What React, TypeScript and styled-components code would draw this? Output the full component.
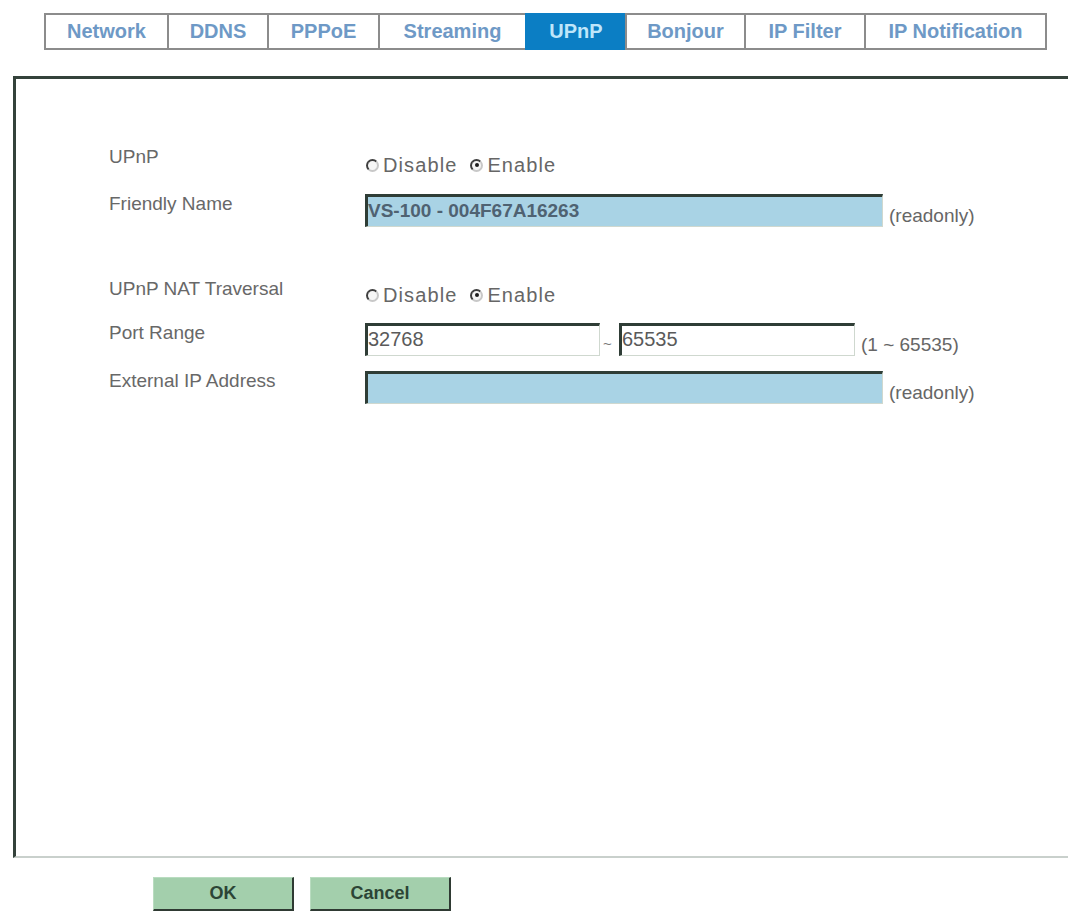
import styled, { createGlobalStyle } from "styled-components";

const tabs = [
  { label: "Network", width: 125 },
  { label: "DDNS", width: 102 },
  { label: "PPPoE", width: 113 },
  { label: "Streaming", width: 149 },
  { label: "UPnP", width: 102, active: true },
  { label: "Bonjour", width: 121 },
  { label: "IP Filter", width: 122 },
  { label: "IP Notification", width: 183 },
];

const GlobalStyle = createGlobalStyle`
  body {
    margin: 0;
    background: #ffffff;
    font-family: "Liberation Sans", Arial, sans-serif;
  }
`;

const RadioGroup = ({ checked }: { checked: "disable" | "enable" }) => (
  <Radios>
    <RadioItem>
      <Radio $on={checked === "disable"} />
      Disable
    </RadioItem>
    <RadioItem>
      <Radio $on={checked === "enable"} />
      Enable
    </RadioItem>
  </Radios>
);

export default function App() {
  return (
    <Page>
      <GlobalStyle />
      <TabBar>
        {tabs.map((t) => (
          <Tab key={t.label} $width={t.width} $active={!!t.active}>
            {t.label}
          </Tab>
        ))}
      </TabBar>

      <Panel>
        <Form>
          <Row $height={47}>
            <Label>UPnP</Label>
            <Control $pad={11}>
              <RadioGroup checked="enable" />
            </Control>
          </Row>
          <Row $height={85}>
            <Label>Friendly Name</Label>
            <Control $pad={3}>
              <Field $width={518} $readonly readOnly value="VS-100 - 004F67A16263" />
              <Hint>(readonly)</Hint>
            </Control>
          </Row>
          <Row $height={44}>
            <Label>UPnP NAT Traversal</Label>
            <Control $pad={9}>
              <RadioGroup checked="enable" />
            </Control>
          </Row>
          <Row $height={48}>
            <Label>Port Range</Label>
            <Control $pad={3}>
              <Field $width={235} readOnly value="32768" />
              <Tilde>~</Tilde>
              <Field $width={236} readOnly value="65535" />
              <Hint>(1 ~ 65535)</Hint>
            </Control>
          </Row>
          <Row $height={48}>
            <Label>External IP Address</Label>
            <Control $pad={3}>
              <Field $width={518} $readonly readOnly value="" />
              <Hint>(readonly)</Hint>
            </Control>
          </Row>
        </Form>
      </Panel>

      <Buttons>
        <Button>OK</Button>
        <Button>Cancel</Button>
      </Buttons>
    </Page>
  );
}

const Page = styled.div`
  width: 1071px;
  height: 915px;
  overflow: hidden;
  padding-top: 13px;
  box-sizing: border-box;
`;

const TabBar = styled.div`
  display: flex;
  margin-left: 44px;
`;

const Tab = styled.div<{ $width: number; $active: boolean }>`
  width: ${(p) => p.$width}px;
  height: 37px;
  box-sizing: border-box;
  margin-left: -2px;
  border: 2px solid #8c8c8c;
  display: flex;
  align-items: center;
  justify-content: center;
  font-size: 20px;
  font-weight: bold;
  color: ${(p) => (p.$active ? "#bfe6fa" : "#6e99c6")};
  background: ${(p) => (p.$active ? "#0b7ec4" : "#ffffff")};
  border-color: ${(p) => (p.$active ? "#0b7ec4" : "#8c8c8c")};

  &:first-child {
    margin-left: 0;
  }
`;

const Panel = styled.div`
  margin: 26px 3px 0 13px;
  height: 782px;
  box-sizing: border-box;
  border-top: 3px solid #34423b;
  border-left: 3px solid #34423b;
  border-bottom: 2px solid #c9d0cc;
  padding: 65px 0 0 93px;
`;

const Form = styled.div`
  display: flex;
  flex-direction: column;
`;

const Row = styled.div<{ $height: number }>`
  display: flex;
  align-items: flex-start;
  height: ${(p) => p.$height}px;
`;

const Label = styled.div`
  width: 256px;
  padding-top: 3px;
  font-size: 19px;
  line-height: 19px;
  color: #686868;
`;

const Control = styled.div<{ $pad: number }>`
  display: flex;
  align-items: center;
  padding-top: ${(p) => p.$pad}px;
`;

const Radios = styled.div`
  display: flex;
  align-items: center;
  gap: 12px;
  font-size: 20px;
  line-height: 20px;
  letter-spacing: 1.1px;
  color: #666666;
`;

const RadioItem = styled.label`
  display: flex;
  align-items: center;
  gap: 4px;
`;

const Radio = styled.span<{ $on: boolean }>`
  position: relative;
  width: 13px;
  height: 13px;
  box-sizing: border-box;
  border-radius: 50%;
  border: 2px solid;
  border-color: #3e3e3e #c8c8c8 #c8c8c8 #3e3e3e;
  background: #f6f6f6;
  margin-left: 1px;

  &::after {
    content: "";
    display: ${(p) => (p.$on ? "block" : "none")};
    position: absolute;
    left: 2.5px;
    top: 2.5px;
    width: 4px;
    height: 4px;
    border-radius: 50%;
    background: #1e1e1e;
  }
`;

const Field = styled.input<{ $width: number; $readonly?: boolean }>`
  width: ${(p) => p.$width}px;
  height: 33px;
  box-sizing: border-box;
  margin: 0;
  padding: 0 0 2px 0;
  border-style: solid;
  border-width: 3px 1px 1px 3px;
  border-color: #2f3d36 #cfd8cf #cfd8cf #2f3d36;
  outline: none;
  background: ${(p) => (p.$readonly ? "#a9d3e5" : "#ffffff")};
  color: ${(p) => (p.$readonly ? "#4f6272" : "#5a5a5a")};
  font-family: "Liberation Sans", Arial, sans-serif;
  font-size: ${(p) => (p.$readonly ? 19 : 20)}px;
  font-weight: ${(p) => (p.$readonly ? "bold" : "normal")};
`;

const Hint = styled.span`
  margin-left: 6px;
  padding-top: 10px;
  font-size: 19px;
  color: #666666;
`;

const Tilde = styled.span`
  width: 19px;
  padding: 8px 0 0 3px;
  box-sizing: border-box;
  font-size: 15px;
  color: #777777;
`;

const Buttons = styled.div`
  display: flex;
  gap: 16px;
  margin: 19px 0 0 153px;
`;

const Button = styled.button`
  width: 141px;
  height: 34px;
  box-sizing: border-box;
  border-style: solid;
  border-width: 1px 2px 2px 1px;
  border-color: #b9dcc0 #2f3a33 #2f3a33 #b9dcc0;
  background: #a3cfac;
  color: #2c4536;
  font-family: "Liberation Sans", Arial, sans-serif;
  font-size: 18px;
  font-weight: bold;
  padding: 0;
`;
